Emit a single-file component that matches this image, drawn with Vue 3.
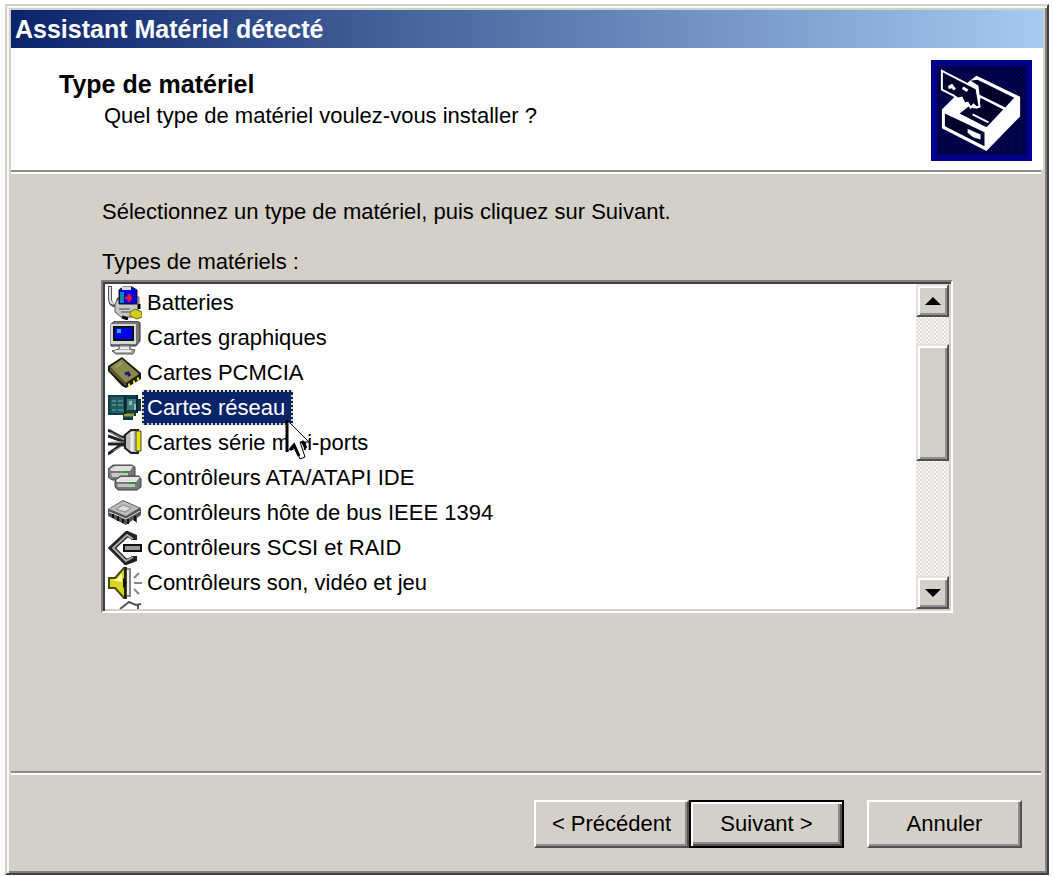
<script setup>
import { ref } from 'vue'

const types = [
  { id: 'battery', label: 'Batteries' },
  { id: 'display', label: 'Cartes graphiques' },
  { id: 'pcmcia', label: 'Cartes PCMCIA' },
  { id: 'network', label: 'Cartes réseau' },
  { id: 'serial', label: 'Cartes série mini-ports' },
  { id: 'ide', label: 'Contrôleurs ATA/ATAPI IDE' },
  { id: 'firewire', label: 'Contrôleurs hôte de bus IEEE 1394' },
  { id: 'scsi', label: 'Contrôleurs SCSI et RAID' },
  { id: 'sound', label: 'Contrôleurs son, vidéo et jeu' },
  { id: 'next', label: '' }
]
const selected = ref('network')
</script>

<template>
  <div class="page">
    <main class="window">
      <div class="titlebar">Assistant Matériel détecté</div>

      <header class="header">
        <div class="heading">
          <h1>Type de matériel</h1>
          <p>Quel type de matériel voulez-vous installer ?</p>
        </div>
        <svg class="logo" viewBox="0 0 102 102" aria-hidden="true">
          <defs>
            <pattern id="dither" width="4" height="4" patternUnits="userSpaceOnUse">
              <rect width="4" height="4" fill="#000070" />
              <rect width="2" height="2" fill="#000010" />
              <rect x="2" y="2" width="2" height="2" fill="#000030" />
            </pattern>
          </defs>
          <rect width="102" height="102" fill="#000088" />
          <rect x="6" y="6" width="90" height="90" fill="url(#dither)" />
          <path d="M46 16 90 37V57L56 92 11 69V50L23 38 38 22Z" fill="#fff" />
          <path d="M47 20 84 38 75 48 49 35 48 26 40 21Z" fill="#00002c" />
          <path d="M50 38 73 50 56 68 29 54 38 47 44 49 49 48Z" fill="#00002c" />
          <path d="M14 54 54 73V87L14 67Z" fill="#00002c" />
          <path d="M11 11 46 29 49 47 46 48 43 45 40 48 37 43 34 44 31 38 27 39 23 36 11 30Z" fill="#00002c" stroke="#fff" stroke-width="2" />
          <path d="M19 29V27L21 26 24 30M32 28 37 31" fill="none" stroke="#fff" stroke-width="3" />
          <path d="M42 55 58 63M38 71 49 76V79L43 77 38 73Z" fill="#fff" stroke="#fff" stroke-width="2" />
        </svg>
      </header>
      <div class="rule"></div>

      <section class="content">
        <p class="intro">Sélectionnez un type de matériel, puis cliquez sur Suivant.</p>
        <p id="types-label" class="types-label">Types de matériels :</p>
        <div class="listbox">
          <ul class="items" role="listbox" aria-labelledby="types-label">
            <li v-for="t in types" :key="t.id" class="item" role="presentation">
              <svg class="icon" viewBox="0 0 34 34" aria-hidden="true">
                <g v-if="t.id === 'battery'">
                  <path d="M2 0V14Q3 20 9 19L11 12" fill="none" stroke="#555" stroke-width="4" />
                  <path d="M2 1V14Q3 19 9 17" fill="none" stroke="#ddd" stroke-width="2" />
                  <path d="M7 18 11 11H31V22L26 31H13L7 26Z" fill="#c8c8c8" stroke="#555" stroke-width="1" />
                  <path d="M11 4 15 1H24L29 4V18H11Z" fill="#0000d8" stroke="#111" />
                  <path d="M14 1H23V4H14Z" fill="#ddd" />
                  <path d="M12 6H16V17H12Z" fill="#008ca8" />
                  <path d="M17 12H24M21 8V16" stroke="#f01048" stroke-width="3" />
                  <path d="M11 23H22M13 26H22" stroke="#888" stroke-width="2" />
                  <path d="M22 26 27 23 34 26V31L29 33 22 30Z" fill="#d4cb20" stroke="#6d6810" />
                  <path d="M31 18V23M14 31 20 33" stroke="#000" stroke-width="3" />
                </g>
                <g v-else-if="t.id === 'display'">
                  <path d="M3 3 7 0H29L32 2V20L28 25H3Z" fill="#777" stroke="#333" />
                  <path d="M3 3H28V23H3Z" fill="#d8d8d8" />
                  <path d="M6 6H25V19H6Z" fill="#0000e8" stroke="#111" stroke-width="2" />
                  <path d="M9 8H13V12H9Z" fill="#20b8e8" />
                  <path d="M11 24H22V28L27 29 25 33H8L4 30 11 28Z" fill="#aaa" stroke="#555" />
                  <path d="M12 27H21M7 30H23" stroke="#eee" stroke-width="2" />
                </g>
                <g v-else-if="t.id === 'pcmcia'">
                  <path d="M0 10 14 1 33 17V23L18 32 14 30 0 15Z" fill="#1d1c08" />
                  <path d="M2 11 14 3 31 18 18 27Z" fill="#8c874c" />
                  <path d="M2 11 18 27V30L2 15Z" fill="#5c5830" />
                  <path d="M17 18 20 17 22 20" fill="none" stroke="#1c1a80" stroke-width="3" />
                  <path d="M20 29H22M25 26H27M29 23H31" stroke="#ede52a" stroke-width="3" />
                  <path d="M8 11 14 7" stroke="#a6a16a" stroke-width="2" />
                </g>
                <g v-else-if="t.id === 'network'">
                  <path d="M0 4H30V8H33V20H28V25H25V29H15V24H0Z" fill="#103b48" />
                  <path d="M2 6H16V22H2Z" fill="#205a62" />
                  <path d="M4 10H8M10 10H15M4 14H8M10 14H15M4 19H8M10 19H15" stroke="#69b3a8" stroke-width="1" />
                  <path d="M19 8H29V19H19Z" fill="#3c7a78" />
                  <path d="M21 10H24V14H21ZM26 13H29V19H26Z" fill="#90b9a8" />
                  <path d="M16 24H26" stroke="#9a9930" stroke-width="3" />
                  <path d="M17 5V23M29 4V22" stroke="#082530" stroke-width="2" />
                </g>
                <g v-else-if="t.id === 'serial'">
                  <path d="M0 4 13 11H21M0 10 14 15H21M0 18H20M0 28 13 19H21" fill="none" stroke="#222" stroke-width="3" />
                  <path d="M2 6 14 12M3 16 18 16M5 25 14 20" fill="none" stroke="#999" stroke-width="1" />
                  <path d="M17 9 23 4H30V27H23L17 22Z" fill="#bbb" stroke="#222" stroke-width="2" />
                  <path d="M24 6V25" stroke="#eee" stroke-width="3" />
                  <path d="M28 5H33V25H28Z" fill="#e7df18" stroke="#4b4910" />
                </g>
                <g v-else-if="t.id === 'ide'">
                  <path d="M0 8 5 4H24L27 6V14L23 19H4L0 16Z" fill="#777" stroke="#444" />
                  <path d="M2 8 7 5H25L22 10H3Z" fill="#ddd" />
                  <path d="M3 12H20V16H4Z" fill="#c4c9c4" />
                  <path d="M15 11H21" stroke="#199c35" stroke-width="2" />
                  <path d="M7 20 12 15H31L33 18V26L29 29H10L7 26Z" fill="#747974" stroke="#3c3c3c" />
                  <path d="M8 19 13 16H32L28 21H9Z" fill="#e4e4e4" />
                  <path d="M9 23H27V26H10Z" fill="#bfc6bf" />
                  <path d="M22 22H28" stroke="#169c33" stroke-width="2" />
                </g>
                <g v-else-if="t.id === 'firewire'">
                  <path d="M0 13 15 4 33 12V19L29 22V27L25 24 18 29 0 20Z" fill="#555" />
                  <path d="M1 13 15 5 31 12 18 20Z" fill="#bbb" />
                  <path d="M8 13 15 9 23 12 17 16Z" fill="#ddd" stroke="#888" />
                  <path d="M1 16 18 23 32 15" fill="none" stroke="#ddd" stroke-width="1" />
                  <path d="M5 18V22M10 20V25M15 23V27M20 23V28M27 20V25" stroke="#111" stroke-width="2" />
                </g>
                <g v-else-if="t.id === 'scsi'">
                  <path d="M26 9V6L19 3 4 17 18 31 26 28V25" fill="none" stroke="#222" stroke-width="6" />
                  <path d="M25 8 19 4 5 17 18 30 25 26" fill="none" stroke="#aaa" stroke-width="2" />
                  <path d="M16 14H33V20H16Z" fill="#999" stroke="#111" stroke-width="2" />
                </g>
                <g v-else-if="t.id === 'sound'">
                  <path d="M1 12H7L16 2H18V32H16L7 22H1Z" fill="#d9d51c" stroke="#4a480c" stroke-width="2" />
                  <path d="M3 14 9 13 14 7V16Z" fill="#ffff9a" />
                  <path d="M17 1V33" stroke="#222" stroke-width="2" />
                  <path d="M19 3H22V30H19" fill="#eee" stroke="#888" stroke-width="2" />
                  <path d="M15 12Q22 17 15 22Z" fill="#111" />
                  <path d="M26 12 31 7M26 17H34M26 23 31 28" stroke="#888" stroke-width="2" />
                </g>
                <g v-else>
                  <path d="M12 8 21 1 28 4 33 3M30 4V8" fill="none" stroke="#555" stroke-width="2" />
                </g>
              </svg>
              <button
                v-if="t.label"
                type="button"
                role="option"
                class="option"
                :class="{ selected: selected === t.id }"
                :aria-selected="selected === t.id"
                @click="selected = t.id"
              >{{ t.label }}</button>
              <svg v-if="t.id === 'network'" class="cursor" viewBox="0 0 26 44" aria-hidden="true">
                <path d="M2 2V34L9 27 15 41 20 39 15 24H24Z" fill="#fff" stroke="#000" stroke-width="1" />
                <path d="M2 2V34M5 32 9 27 14 38M17 23 21 30" fill="none" stroke="#000" stroke-width="3" />
              </svg>
            </li>
          </ul>
          <div class="scrollbar">
            <button type="button" class="arrow" aria-label="Défiler vers le haut">
              <svg viewBox="0 0 16 8" aria-hidden="true"><path d="M8 0 16 8H0Z" /></svg>
            </button>
            <div class="track"><div class="thumb"></div></div>
            <button type="button" class="arrow" aria-label="Défiler vers le bas">
              <svg viewBox="0 0 16 8" aria-hidden="true"><path d="M0 0H16L8 8Z" /></svg>
            </button>
          </div>
        </div>
      </section>

      <div class="rule"></div>
      <footer class="footer">
        <button type="button" class="push">&lt; Précédent</button>
        <button type="button" class="push default">Suivant &gt;</button>
        <button type="button" class="push cancel">Annuler</button>
      </footer>
    </main>
  </div>
</template>

<style>
body {
  background: #fff;
}
</style>

<style scoped>
.page {
  box-sizing: border-box;
  min-height: 100vh;
  display: flex;
  padding: 4px 4px 1px 5px;
  font-family: "Liberation Sans", Arial, sans-serif;
  font-size: 22px;
  line-height: 32px;
  color: #000;
}
.page * {
  box-sizing: border-box;
}
h1, p, ul {
  margin: 0;
  padding: 0;
}
button {
  font: inherit;
  color: inherit;
  margin: 0;
  padding: 0;
}
.window {
  flex: 1;
  display: flex;
  flex-direction: column;
  padding: 4px;
  background: #d4d0c8;
  border: 2px solid;
  border-color: #d4d0c8 #404040 #404040 #d4d0c8;
  box-shadow: inset 2px 2px #f8f7f3, inset -2px -2px #808080;
}
.titlebar {
  height: 38px;
  padding: 0 4px;
  line-height: 38px;
  font-size: 25px;
  font-weight: bold;
  color: #fff;
  background: linear-gradient(90deg, #0a246a, #a6caf0);
}
.header {
  display: flex;
  justify-content: space-between;
  padding: 12px 11px 9px 48px;
  background: #fff;
}
.heading {
  padding-top: 8px;
}
.heading h1 {
  font-size: 25px;
  font-weight: bold;
}
.heading p {
  padding-left: 45px;
}
.logo {
  width: 101px;
  height: 101px;
}
.rule {
  height: 4px;
  margin-right: 2px;
  border-top: 2px solid #8c8c88;
  border-bottom: 2px solid #fff;
}
.content {
  flex: 1;
  padding: 22px 90px 22px 90px;
}
.intro, .types-label {
  padding-left: 1px;
}
.types-label {
  margin-top: 18px;
}
.listbox {
  display: flex;
  height: 333px;
  margin-top: 2px;
  background: #fff;
  border: 2px solid;
  border-color: #808080 #fff #fff #808080;
  box-shadow: inset 2px 2px #404040, inset -2px -2px #d4d0c8;
  padding: 2px;
}
.items {
  flex: 1;
  list-style: none;
  overflow: hidden;
  padding-top: 1px;
  padding-left: 3px;
}
.item {
  position: relative;
  display: flex;
  align-items: center;
  height: 35px;
}
.icon {
  flex: none;
  width: 34px;
  height: 34px;
}
.option {
  height: 35px;
  padding: 0 6px 0 3px;
  line-height: 31px;
  white-space: nowrap;
  background: none;
  border: 2px solid transparent;
}
.option.selected {
  color: #fff;
  background: #0a246a;
  border: 2px dotted #d8d5a8;
}
.cursor {
  position: absolute;
  left: 177px;
  top: 28px;
  width: 26px;
  height: 44px;
  z-index: 1;
}
.scrollbar {
  width: 33px;
  display: flex;
  flex-direction: column;
}
.arrow, .thumb {
  background: #d4d0c8;
  border: 2px solid;
  border-color: #e4e1db #505050 #505050 #e4e1db;
  box-shadow: inset 2px 2px #fff, inset -2px -2px #909090;
}
.arrow {
  height: 33px;
  display: flex;
  align-items: center;
  justify-content: center;
}
.arrow svg {
  width: 16px;
  height: 8px;
}
.track {
  flex: 1;
  padding-top: 27px;
  background: repeating-conic-gradient(#e2dfda 0 25%, #f6f5f2 0 50%) 0 0 / 4px 4px;
}
.thumb {
  height: 117px;
}
.footer {
  display: flex;
  justify-content: flex-end;
  padding: 25px 21px 21px;
}
.push {
  width: 155px;
  height: 48px;
  background: #d4d0c8;
  border: 2px solid;
  border-color: #fff #505050 #505050 #fff;
  box-shadow: inset -2px -2px #8c8c88;
}
.push.default {
  border-color: #000;
  box-shadow: inset 2px 2px #fff, inset -2px -2px #505050, inset -4px -4px #8c8c88;
}
.cancel {
  margin-left: 23px;
}
</style>
